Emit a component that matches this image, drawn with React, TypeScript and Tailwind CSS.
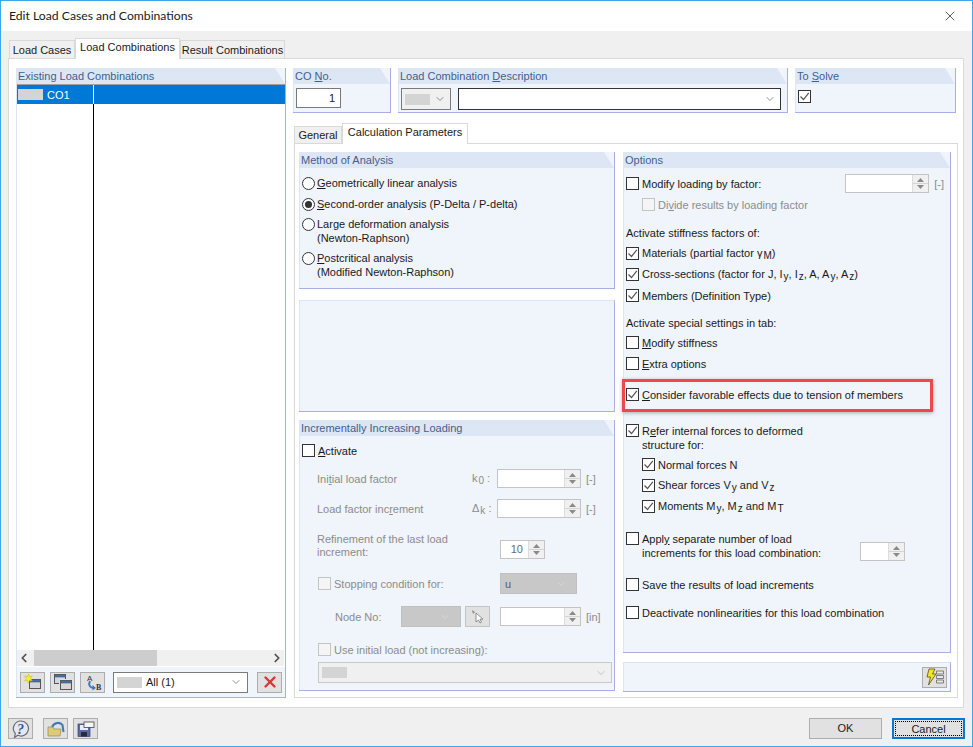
import type { ReactNode } from "react";
import { ChevronDown, ChevronLeft, ChevronRight, X } from "lucide-react";

const Panel = ({ title, className, bodyClass, children }: { title?: ReactNode; className: string; bodyClass?: string; children?: ReactNode }) => (
  <div className={`flex flex-col bg-[#f0f4fb] border-r border-b border-[#a8aee6] ${className}`}>
    {title && (
      <div className="h-4 shrink-0 pl-[2px] leading-4 text-[#3f5f8f] bg-[#dce6f4] [clip-path:polygon(0_0,calc(100%-10px)_0,100%_100%,0_100%)]">
        {title}
      </div>
    )}
    <div className={`flex-1 min-h-0 border-l border-[#dde4f4] ${bodyClass ?? ""}`}>{children}</div>
  </div>
);

const Check = ({ checked, disabled }: { checked?: boolean; disabled?: boolean }) => (
  <span className={`w-[13px] h-[13px] shrink-0 border flex items-center justify-center ${disabled ? "border-[#c4c4c4] bg-[#f5f5f5]" : "border-[#333333] bg-white"}`}>
    {checked && (
      <svg viewBox="0 0 11 11" className="w-[11px] h-[11px]">
        <path d="M1.5 5.5 4.5 8.5 9.8 1.8" fill="none" stroke="#555555" strokeWidth="1.2" />
      </svg>
    )}
  </span>
);

const Radio = ({ checked }: { checked?: boolean }) => (
  <span className="w-[13px] h-[13px] shrink-0 rounded-full border border-[#333333] bg-white flex items-center justify-center">
    {checked && <span className="w-[7px] h-[7px] rounded-full bg-[#333333]" />}
  </span>
);

const U = ({ children }: { children: ReactNode }) => <span className="underline underline-offset-1">{children}</span>;
const S = ({ children }: { children: ReactNode }) => <span className="text-[10px] relative top-[2px] ml-[1px]">{children}</span>;

const CheckRow = ({ checked, disabled, className, children }: { checked?: boolean; disabled?: boolean; className?: string; children: ReactNode }) => (
  <div className={`flex items-center gap-[3px] h-[21px] ${disabled ? "text-[#8c8c8c]" : ""} ${className ?? ""}`}>
    <Check checked={checked} disabled={disabled} />
    <span className="whitespace-nowrap">{children}</span>
  </div>
);

const RadioRow = ({ checked, className, children }: { checked?: boolean; className?: string; children: ReactNode }) => (
  <div className={`flex items-start gap-[2px] ${className ?? ""}`}>
    <Radio checked={checked} />
    <span className="leading-[13.5px] whitespace-nowrap">{children}</span>
  </div>
);

const Spin = ({ w, value, unit }: { w: string; value?: string; unit?: string }) => (
  <div className="flex items-center gap-[5px]">
    <div className={`h-[19px] flex bg-white border border-[#c4c4c4] ${w}`}>
      <div className="flex-1 text-right pr-[5px] leading-[17px] text-[#6c6c6c]">{value}</div>
      <div className="w-4 flex flex-col gap-[1px] bg-[#f0f0f0] border-l border-[#dcdcdc] py-[1px] items-center justify-center">
        <svg viewBox="0 0 7 4" className="w-[7px] h-[4px]"><path d="M3.5 0 7 4H0z" fill="#8a8a8a" /></svg>
        <span className="w-full h-px bg-[#d4d4d4]" />
        <svg viewBox="0 0 7 4" className="w-[7px] h-[4px]"><path d="M0 0h7L3.5 4z" fill="#8a8a8a" /></svg>
      </div>
    </div>
    {unit && <span className="text-[#8c8c8c]">{unit}</span>}
  </div>
);

const DisabledSelect = ({ w, text }: { w: string; text?: string }) => (
  <div className={`h-[21px] flex items-center justify-between pl-[4px] pr-[9px] bg-[#c8c8c8] border border-[#c0c0c0] text-[#5c5c5c] ${w}`}>
    <span>{text}</span>
    <ChevronDown className="w-3 h-3 text-[#e4e4e4]" strokeWidth={1.2} />
  </div>
);

const IconButton = ({ className, children }: { className?: string; children: ReactNode }) => (
  <div className={`w-[25px] h-[21px] flex items-center justify-center bg-[#e1e1e1] border border-[#adadad] ${className ?? ""}`}>{children}</div>
);

const WindowIcon = ({ x, y }: { x: number; y: number }) => (
  <g>
    <rect x={x + 0.5} y={y + 0.5} width="11" height="9" fill="#d6d6d6" stroke="#555555" />
    <rect x={x + 0.5} y={y + 0.5} width="11" height="2.5" fill="#3f6fb4" stroke="#555555" strokeWidth="0.6" />
  </g>
);

export default function App() {
  return (
    <div className="w-[973px] h-[747px] flex flex-col overflow-hidden border border-[#3ea6ea] bg-[#f0f0f0] text-[#1a1a1a] text-[11px] leading-4 font-['Liberation_Sans',sans-serif]">
      {/* title bar */}
      <div className="h-[30px] shrink-0 bg-white flex items-center justify-between pl-2 pr-[14px]">
        <span className="text-[12.2px] font-['Lato',sans-serif]">Edit Load Cases and Combinations</span>
        <X className="w-4 h-4 text-[#333333]" strokeWidth={1.2} />
      </div>

      {/* top tabs */}
      <div className="h-[27px] shrink-0 ml-[8px] flex items-end">
        <div className="h-[18px] w-[66px] bg-[#f0f0f0] border border-b-0 border-[#d9d9d9] text-center leading-[18px] whitespace-nowrap">Load Cases</div>
        <div className="h-[21px] w-[105px] bg-white border border-b-0 border-[#d9d9d9] text-center leading-[17px] relative top-px z-10 whitespace-nowrap">Load Combinations</div>
        <div className="h-[18px] w-[105px] bg-[#f0f0f0] border border-b-0 border-[#d9d9d9] text-center leading-[18px] whitespace-nowrap">Result Combinations</div>
      </div>

      <div className="w-[956px] h-[650px] ml-[7px] shrink-0 bg-white border border-[#d9d9d9] pt-[9px] pl-[7px] flex gap-[7px]">
        {/* existing combinations */}
        <Panel title="Existing Load Combinations" className="w-[270px] h-[630px]" bodyClass="flex flex-col">
          <div className="flex-1 flex flex-col bg-white border-t border-[#a0a0a0]">
            <div className="h-[19px] flex bg-[#0078d7] text-white">
              <div className="w-[77px] border-r border-white flex items-center pl-[1px] gap-[4px]">
                <span className="w-[25px] h-[11px] bg-[#d4d4d4]" />
                <span>CO1</span>
              </div>
            </div>
            <div className="flex-1 w-[77px] border-r border-black" />
            <div className="h-[16px] flex items-center justify-between bg-[#f0f0f0] mr-[1px]">
              <ChevronLeft className="w-[14px] h-[14px] text-[#505050]" strokeWidth={3} />
              <div className="flex-1 h-full">
                <div className="w-[123px] h-full ml-[3px] bg-[#cdcdcd]" />
              </div>
              <ChevronRight className="w-[14px] h-[14px] text-[#505050]" strokeWidth={3} />
            </div>
          </div>
          <div className="h-[31px] shrink-0 border-t border-white flex items-center pl-[3px] gap-[5px]">
            <IconButton>
              <svg viewBox="0 0 18 16" className="w-[18px] h-[16px]">
                <WindowIcon x={5} y={5} />
                <path d="M4.5 0l1 2.8 2.8-.8-1.6 2.6 1.6 2.4-2.8-.6L4.5 9.2 3.4 6.4.6 7l1.7-2.4L.6 2l2.8.8z" fill="#f8ee30" stroke="#c4b420" strokeWidth="0.5" />
              </svg>
            </IconButton>
            <IconButton>
              <svg viewBox="0 0 18 16" className="w-[18px] h-[16px]">
                <WindowIcon x={0} y={0} />
                <rect x="5" y="5" width="13" height="11" fill="#e1e1e1" />
                <WindowIcon x={6} y={6} />
              </svg>
            </IconButton>
            <IconButton>
              <svg viewBox="0 0 18 18" className="w-[18px] h-[18px]">
                <path d="M6 8C4 12 6 15 10 15" fill="none" stroke="#3f78b8" strokeWidth="2" />
                <path d="M8.5 12 12 15l-3.500 2.500z" fill="#3f78b8" />
                <text x="3" y="7.500" fontSize="8" fontFamily="'Liberation Sans'" fill="#333333">A</text>
                <text x="12" y="17" fontSize="8" fontWeight="700" fontFamily="'Liberation Serif'" fill="#333333">B</text>
              </svg>
            </IconButton>
            <div className="w-[135px] h-[21px] ml-[3px] flex items-center justify-between bg-white border border-[#7a7a7a] pl-[3px] pr-[5px]">
              <span className="flex items-center gap-[4px]">
                <span className="w-[25px] h-[11px] bg-[#d4d4d4]" />
                <span>All (1)</span>
              </span>
              <ChevronDown className="w-3 h-3 text-[#555555]" strokeWidth={1.3} />
            </div>
            <IconButton className="ml-[4px]">
              <X className="w-[18px] h-[18px] text-[#d83838]" strokeWidth={3.2} />
            </IconButton>
          </div>
        </Panel>

        <div className="flex-1 min-w-0 flex flex-col">
          {/* header row */}
          <div className="flex h-[45px] shrink-0">
            <Panel title={<>CO <U>N</U>o.</>} className="w-[98px]" bodyClass="pt-[4px] pl-[2px]">
              <div className="w-[45px] h-[20px] bg-white border border-[#7a7a7a] text-right pr-[5px] leading-[18px]">1</div>
            </Panel>
            <Panel title={<>Load Combination <U>D</U>escription</>} className="w-[390px] ml-[7px]" bodyClass="pt-[4px] pl-[2px] flex gap-[7px]">
              <div className="w-[50px] h-[22px] flex items-center justify-between bg-[#f0f0f0] border border-[#7a7a7a] pl-[3px] pr-[4px]">
                <span className="w-[25px] h-[11px] bg-[#d4d4d4]" />
                <ChevronDown className="w-3 h-3 text-[#555555]" strokeWidth={1.3} />
              </div>
              <div className="w-[323px] h-[22px] flex items-center justify-end bg-white border border-[#333333] pr-[4px]">
                <ChevronDown className="w-3 h-3 text-[#555555]" strokeWidth={1.3} />
              </div>
            </Panel>
            <Panel title={<>To <U>S</U>olve</>} className="w-[161px] ml-[7px]" bodyClass="pt-[6px] pl-[2px]">
              <Check checked />
            </Panel>
          </div>

          {/* sub tabs */}
          <div className="h-[21px] mt-[9px] ml-px flex items-end shrink-0">
            <div className="h-[17px] w-[48px] bg-[#f0f0f0] border border-b-0 border-[#d9d9d9] text-center leading-[17px] whitespace-nowrap">General</div>
            <div className="h-[21px] w-[126px] bg-white border border-b-0 border-[#d9d9d9] text-center leading-[17px] relative top-px z-10 whitespace-nowrap">Calculation Parameters</div>
          </div>
          <div className="w-[664px] h-[555px] ml-px border border-[#d9d9d9] pt-[8px] pl-[4px] flex gap-[8px]">
            <div className="w-[316px] flex flex-col">
              <Panel title="Method of Analysis" className="h-[137px]" bodyClass="pt-[9px] pl-[2px]">
                <RadioRow><U>G</U>eometrically linear analysis</RadioRow>
                <RadioRow checked className="mt-[7px]"><U>S</U>econd-order analysis (P-Delta / P-delta)</RadioRow>
                <RadioRow className="mt-[7px]"><>Lar<U>g</U>e deformation analysis<br />(Newton-Raphson)</></RadioRow>
                <RadioRow className="mt-[7px]"><><U>P</U>ostcritical analysis<br />(Modified Newton-Raphson)</></RadioRow>
              </Panel>
              <Panel className="h-[112px] mt-[11px] border-t border-t-[#dde4f4]" />
              <Panel title="Incrementally Increasing Loading" className="h-[271px] mt-[8px]" bodyClass="pl-[2px] text-[#8c8c8c]">
                <CheckRow className="mt-[4px] text-[#1a1a1a]"><U>A</U>ctivate</CheckRow>
                <div className="mt-[8px] ml-[15px] flex items-center h-[19px]">
                  <span className="w-[155px]">Ini<U>t</U>ial load factor</span>
                  <span className="w-[25px] whitespace-nowrap">k<S>0</S> :</span>
                  <Spin w="w-[84px]" unit="[-]" />
                </div>
                <div className="mt-[11px] ml-[15px] flex items-center h-[19px]">
                  <span className="w-[155px]">Load factor inc<U>r</U>ement</span>
                  <span className="w-[25px] whitespace-nowrap">Δ<S>k</S> :</span>
                  <Spin w="w-[84px]" unit="[-]" />
                </div>
                <div className="mt-[15px] ml-[15px] flex items-end">
                  <span className="w-[183px] leading-[13px]">Refinement of the last load<br />increment:</span>
                  <Spin w="w-[45px]" value="10" />
                </div>
                <div className="mt-[14px] ml-[16px] flex items-center">
                  <CheckRow disabled className="w-[182px] text-[#6c6c6c]">Stopping condition for:</CheckRow>
                  <DisabledSelect w="w-[77px]" text="u" />
                </div>
                <div className="mt-[12px] ml-[33px] flex items-center">
                  <span className="w-[66px]">Node No:</span>
                  <DisabledSelect w="w-[60px]" />
                  <IconButton className="ml-[4px] bg-[#d0d0d0] border-[#c4c4c4]">
                    <svg viewBox="0 0 16 16" className="w-[16px] h-[16px]">
                      <path d="M2 1 5 3 3 5z" fill="#8a8a8a" />
                      <path d="M6 4v9l2.5-2 1.5 3 1.5-.8-1.5-3H13z" fill="#ffffff" stroke="#777777" strokeWidth="0.8" />
                    </svg>
                  </IconButton>
                  <span className="ml-[10px]"><Spin w="w-[81px]" unit="[in]" /></span>
                </div>
                <CheckRow disabled className="mt-[12px] ml-[16px] text-[#6c6c6c]">Use initial load (not increasing):</CheckRow>
                <div className="mt-[2px] ml-[16px] w-[294px] h-[21px] flex items-center justify-between bg-[#f0f0f0] border border-[#c8c8c8] pl-[3px] pr-[4px]">
                  <span className="w-[25px] h-[11px] bg-[#d4d4d4]" />
                  <ChevronDown className="w-3 h-3 text-[#aaaaaa]" strokeWidth={1.3} />
                </div>
              </Panel>
            </div>

            <div className="w-[328px] flex flex-col">
              <Panel title="Options" className="h-[501px]" bodyClass="pl-[2px]">
                <div className="mt-[5px] flex items-center justify-between pr-[6px]">
                  <CheckRow>Modify loading by factor:</CheckRow>
                  <Spin w="w-[84px]" unit="[-]" />
                </div>
                <CheckRow disabled className="ml-[16px]">Di<U>v</U>ide results by loading factor</CheckRow>
                <div className="mt-[8px] h-[20px] leading-[21px]">Activate stiffness factors of:</div>
                <CheckRow checked>Materials (partial factor γ<S>M</S>)</CheckRow>
                <CheckRow checked>Cross-sections (factor for J, I<S>y</S>, I<S>z</S>, A, A<S>y</S>, A<S>z</S>)</CheckRow>
                <CheckRow checked>Members (Definition Type)</CheckRow>
                <div className="mt-[7px] h-[19px] leading-[21px]">Activate special settings in tab:</div>
                <CheckRow><U>M</U>odify stiffness</CheckRow>
                <CheckRow><U>E</U>xtra options</CheckRow>
                <div className="relative mt-[10px]">
                  <CheckRow checked><U>C</U>onsider favorable effects due to tension of members</CheckRow>
                  <div className="absolute left-[-4px] top-[-5px] w-[311px] h-[33px] border-[3px] border-[#f04848] shadow-[0_1px_4px_rgba(0,0,0,0.3)]" />
                </div>
                <div className="mt-[19px] flex items-start gap-[3px]">
                  <Check checked />
                  <span className="leading-[14px]">R<U>e</U>fer internal forces to deformed<br />structure for:</span>
                </div>
                <CheckRow checked className="ml-[16px] mt-[2px]">Normal forces N</CheckRow>
                <CheckRow checked className="ml-[16px]">Shear forces V<S>y</S> and V<S>z</S></CheckRow>
                <CheckRow checked className="ml-[16px]">Moments M<S>y</S>, M<S>z</S> and M<S>T</S></CheckRow>
                <div className="mt-[15px] h-[28px] flex items-start">
                  <Check />
                  <span className="ml-[3px] w-[218px] leading-[14px] whitespace-nowrap">Appl<U>y</U> separate number of load<br />increments for this load combination:</span>
                  <div className="mt-[10px]"><Spin w="w-[45px]" /></div>
                </div>
                <CheckRow className="mt-[14px]">Save the results of load increments</CheckRow>
                <CheckRow className="mt-[7px]">Deactivate nonlinearities for this load combination</CheckRow>
              </Panel>
              <Panel className="h-[30px] mt-[9px] border-t border-t-[#dde4f4]" bodyClass="flex justify-end items-center pr-[3px]">
                <IconButton className="w-[24px]">
                  <svg viewBox="0 0 20 18" className="w-[20px] h-[18px]">
                    <path d="M4 1h6L7.500 6H11L3.500 17 5.500 9H2z" fill="#f2e62a" stroke="#55520c" strokeWidth="0.8" />
                    <path d="M11.500 3h7v3h-7zM11.500 7.500h7v3h-7zM11.500 12h7v3h-7z" fill="#e8e8e8" stroke="#666666" strokeWidth="0.8" />
                  </svg>
                </IconButton>
              </Panel>
            </div>
          </div>
        </div>
      </div>

      {/* footer */}
      <div className="flex-1 flex items-start pt-[10px] pl-[7px] pr-[7px]">
        <IconButton>
          <svg viewBox="0 0 18 18" className="w-[18px] h-[18px]">
            <path d="M9 1a7.500 7.500 0 1 1-3.200 14.300L2.500 17.500l.8-4A7.500 7.500 0 0 1 9 1z" fill="#e4e8f0" stroke="#6a6a78" strokeWidth="1.2" />
            <text x="5" y="13.500" fontSize="14" fontWeight="700" fontStyle="italic" fontFamily="'Liberation Serif'" fill="#2f5696">?</text>
          </svg>
        </IconButton>
        <IconButton className="ml-[10px]">
          <svg viewBox="0 0 18 16" className="w-[18px] h-[16px]">
            <path d="M5 6C7 1.500 13 .5 15.500 4l1 7" fill="none" stroke="#3f78b8" strokeWidth="2" />
            <path d="M1 6h5l1 2h7l-1 7H1z" fill="#dccb78" stroke="#9a8a48" strokeWidth="0.7" />
          </svg>
        </IconButton>
        <IconButton className="ml-[5px]">
          <svg viewBox="0 0 18 16" className="w-[18px] h-[16px]">
            <rect x="1" y="3" width="12" height="12.500" fill="#5a6aa8" stroke="#3a4470" strokeWidth="0.7" />
            <rect x="3" y="4" width="8" height="5" fill="#e8ecf4" />
            <rect x="4" y="11" width="6" height="4.500" fill="#2a2a3a" />
            <rect x="7" y="1" width="10" height="5.500" fill="#f5f5f5" stroke="#444444" strokeWidth="0.8" />
          </svg>
        </IconButton>
        <div className="w-[73px] h-[21px] ml-auto bg-[#e1e1e1] border border-[#adadad] text-center leading-[19px]">OK</div>
        <div className="w-[73px] h-[21px] ml-[10px] bg-[#e1e1e1] border-2 border-[#0078d7] p-px">
          <div className="h-full border border-dotted border-black text-center leading-[15px]">Cancel</div>
        </div>
      </div>
    </div>
  );
}
